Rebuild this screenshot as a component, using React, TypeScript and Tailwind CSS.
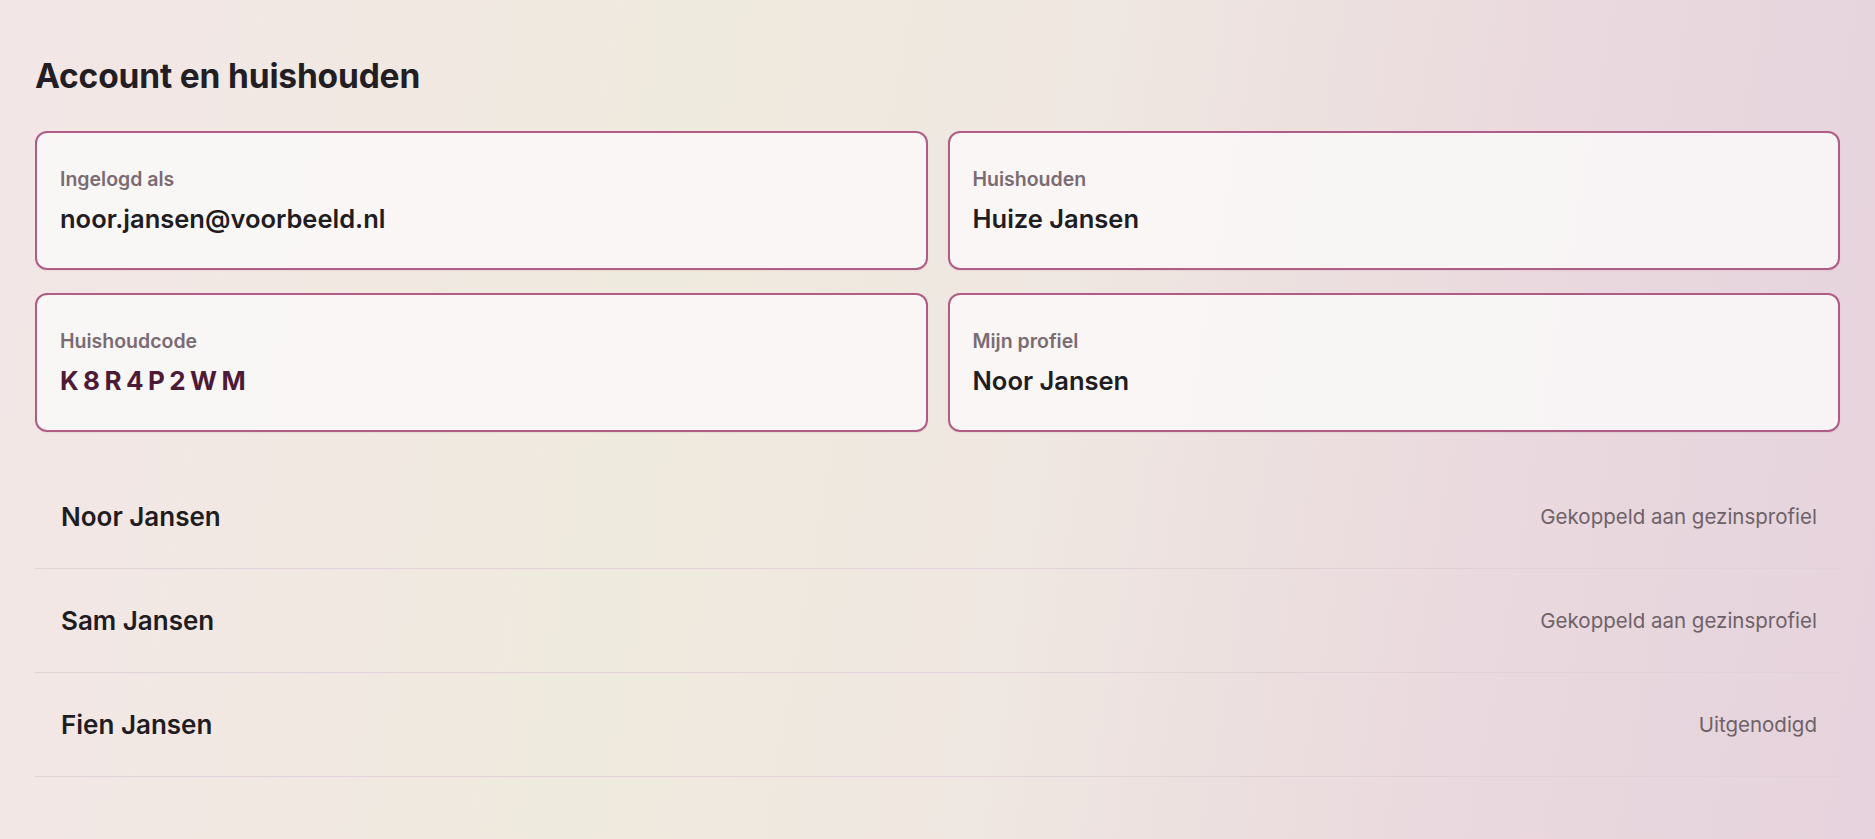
import React from 'react';

type InfoCardProps = {
  label: string;
  value: string;
  code?: boolean;
};

const InfoCard = ({ label, value, code }: InfoCardProps) => (
  <div className="flex h-[139px] flex-col justify-center rounded-[12px] border-2 border-[#b05d85] bg-[#faf7f7]/90 px-[23px] shadow-[0_1px_2px_rgba(80,30,50,0.06)]">
    <span className="text-[19.5px] leading-[24px] font-semibold text-[#7a6b73]">{label}</span>
    {code ? (
      <span className="mt-[12px] text-[26px] leading-[32px] font-bold tracking-[0.17em] text-[#4d1b36]">{value}</span>
    ) : (
      <span className="mt-[12px] text-[25.5px] leading-[32px] font-semibold text-[#1f1c22]">{value}</span>
    )}
  </div>
);

const members = [
  { name: 'Noor Jansen', status: 'Gekoppeld aan gezinsprofiel' },
  { name: 'Sam Jansen', status: 'Gekoppeld aan gezinsprofiel' },
  { name: 'Fien Jansen', status: 'Uitgenodigd' },
];

export default function App() {
  return (
    <div
      className="min-h-screen w-full bg-[linear-gradient(100deg,#f3e6e7_0%,#efeade_35%,#efe7e1_55%,#ead9de_78%,#e6d3dd_100%)] px-[35px] pt-[56px] pb-10"
      style={{ fontFamily: 'Inter, "Noto Sans", "Liberation Sans", sans-serif' }}
    >
      <h1 className="text-[33.5px] leading-[40px] font-bold tracking-[-0.005em] text-[#221e24]">Account en huishouden</h1>

      {/* Account info */}
      <div className="mt-[35px] grid grid-cols-2 gap-x-[20px] gap-y-[23px]">
        <InfoCard label="Ingelogd als" value="noor.jansen@voorbeeld.nl" />
        <InfoCard label="Huishouden" value="Huize Jansen" />
        <InfoCard label="Huishoudcode" value="K8R4P2WM" code />
        <InfoCard label="Mijn profiel" value="Noor Jansen" />
      </div>

      {/* Members */}
      <div className="mt-[33px] flex flex-col">
        {members.map((m) => (
          <div
            key={m.name}
            className="flex h-[104px] items-center justify-between border-b border-[#e2d2d8] pl-[26px] pr-[23px]"
          >
            <span className="text-[26px] leading-[32px] font-semibold text-[#1f1c22]">{m.name}</span>
            <span className="text-[20.5px] leading-[28px] text-[#6e6268]">{m.status}</span>
          </div>
        ))}
      </div>
    </div>
  );
}
